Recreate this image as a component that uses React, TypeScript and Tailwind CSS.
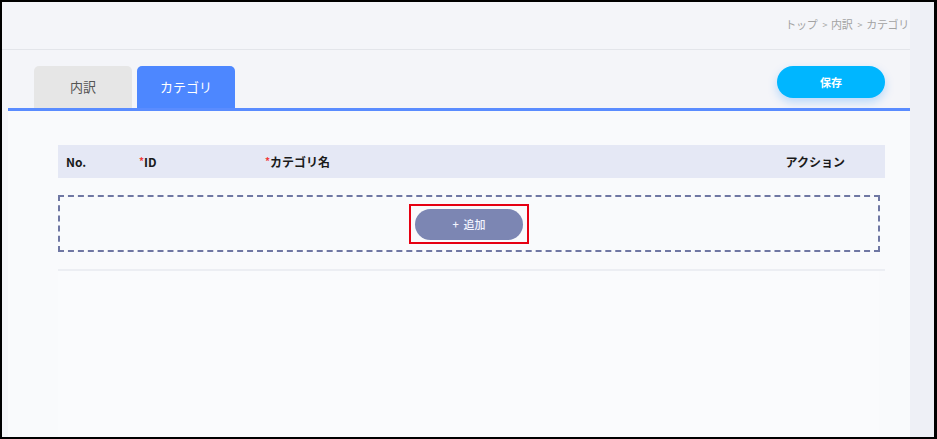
import React from 'react';

const font = { fontFamily: '"Noto Sans CJK JP", "Noto Sans", sans-serif' };

const Breadcrumb: React.FC<{ items: string[] }> = ({ items }) => (
  <div className="flex items-center text-[11px] leading-none text-[#a3a3a3] tracking-[-0.3px]">
    {items.map((item, i) => (
      <React.Fragment key={item}>
        {i > 0 && <span className="text-[9px] ml-[5px] mr-[4px]">&gt;</span>}
        <span>{item}</span>
      </React.Fragment>
    ))}
  </div>
);

const Tab: React.FC<{ label: string; active?: boolean }> = ({ label, active }) => (
  <button
    className={`w-[98px] h-[42px] rounded-t-[5px] text-[13px] flex items-center justify-center ${
      active ? 'bg-[#4d87ff] text-white' : 'bg-[#e6e6e6] text-[#555]'
    }`}
  >
    {label}
  </button>
);

const Required: React.FC<{ label: string }> = ({ label }) => (
  <span>
    <span className="text-[#f03c3c] text-[10px] align-top">*</span>
    {label}
  </span>
);

export default function App() {
  return (
    <div className="w-[937px] h-[439px] border-2 border-r-[3px] border-black bg-[#f4f5f9] flex overflow-hidden" style={font}>
      <div className="w-[908px] flex flex-col">
        <header className="h-[48px] border-b border-[#e3e5ea] flex items-start justify-end pt-[17px] pr-[1px]">
          <Breadcrumb items={['トップ', '内訳', 'カテゴリ']} />
        </header>

        <div className="flex items-start pl-[32px] pt-[16px] pr-[25px]">
          <div className="flex gap-[5px]">
            <Tab label="内訳" />
            <Tab label="カテゴリ" active />
          </div>
          <button className="ml-auto w-[108px] h-[32px] rounded-full bg-[#00b6ff] text-white text-[11px] font-bold shadow-[0_4px_10px_rgba(0,130,255,0.25)]">
            保存
          </button>
        </div>

        <section className="flex-1 ml-[6px] border-t-[3px] border-[#5a8cff] bg-[#f9fafc] pl-[50px] pr-[25px] pt-[34px] flex flex-col">
          <div className="h-[33px] bg-[#e5e8f5] flex items-center text-[12px] font-bold text-[#1a1a1a] pl-[8px] pr-[40px]">
            <div className="w-[73px]">No.</div>
            <div className="w-[126px]"><Required label="ID" /></div>
            <div className="flex-1"><Required label="カテゴリ名" /></div>
            <div>アクション</div>
          </div>

          <div className="mt-[17px] mr-[5px] h-[57px] border-2 border-dashed border-[#6f77a3] flex items-center justify-center">
            <div className="border-2 border-[#e60012] pt-[3px] pb-[2px] px-[4px] mt-[1px]">
              <button className="w-[108px] h-[31px] rounded-full bg-[#7c86b3] text-[#f3f4ff] text-[11px] font-medium">
                +&nbsp;&nbsp;追加
              </button>
            </div>
          </div>

          <div className="mt-[17px] h-[2px] bg-[#eceef3]" />
          <div className="flex-1 mr-[6px] bg-[#fafbfd]" />
        </section>
      </div>
      <div className="flex-1 bg-[#eef0f6]" />
    </div>
  );
}
